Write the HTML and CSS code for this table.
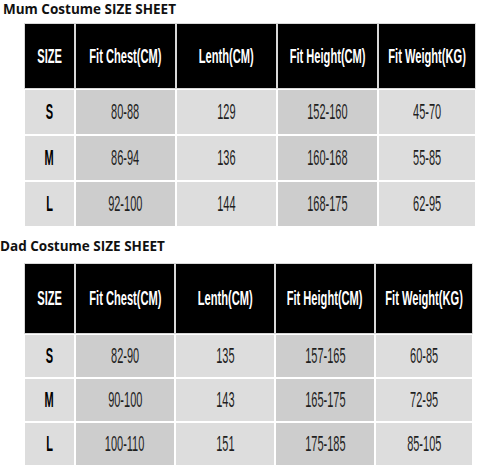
FILE: index.html
```html
<!DOCTYPE html>
<html>
<head>
<meta charset="utf-8">
<link rel="stylesheet" href="styles.css">
</head>
<body>
<section class="sheet sheet-mum">
  <h2 class="title">Mum Costume SIZE SHEET</h2>
  <div class="table">
    <div class="cell head"><span>SIZE</span></div>
    <div class="cell head"><span>Fit Chest(CM)</span></div>
    <div class="cell head"><span>Lenth(CM)</span></div>
    <div class="cell head"><span>Fit Height(CM)</span></div>
    <div class="cell head"><span>Fit Weight(KG)</span></div>

    <div class="cell size light"><span>S</span></div>
    <div class="cell dark"><span>80-88</span></div>
    <div class="cell light"><span>129</span></div>
    <div class="cell dark"><span>152-160</span></div>
    <div class="cell light"><span>45-70</span></div>

    <div class="cell size light"><span>M</span></div>
    <div class="cell dark"><span>86-94</span></div>
    <div class="cell light"><span>136</span></div>
    <div class="cell dark"><span>160-168</span></div>
    <div class="cell light"><span>55-85</span></div>

    <div class="cell size light"><span>L</span></div>
    <div class="cell dark"><span>92-100</span></div>
    <div class="cell light"><span>144</span></div>
    <div class="cell dark"><span>168-175</span></div>
    <div class="cell light"><span>62-95</span></div>
  </div>
</section>
<section class="sheet sheet-dad">
  <h2 class="title">Dad Costume SIZE SHEET</h2>
  <div class="table">
    <div class="cell head"><span>SIZE</span></div>
    <div class="cell head"><span>Fit Chest(CM)</span></div>
    <div class="cell head"><span>Lenth(CM)</span></div>
    <div class="cell head"><span>Fit Height(CM)</span></div>
    <div class="cell head"><span>Fit Weight(KG)</span></div>

    <div class="cell size light"><span>S</span></div>
    <div class="cell dark"><span>82-90</span></div>
    <div class="cell light"><span>135</span></div>
    <div class="cell dark"><span>157-165</span></div>
    <div class="cell light"><span>60-85</span></div>

    <div class="cell size light"><span>M</span></div>
    <div class="cell dark"><span>90-100</span></div>
    <div class="cell light"><span>143</span></div>
    <div class="cell dark"><span>165-175</span></div>
    <div class="cell light"><span>72-95</span></div>

    <div class="cell size light"><span>L</span></div>
    <div class="cell dark"><span>100-110</span></div>
    <div class="cell light"><span>151</span></div>
    <div class="cell dark"><span>175-185</span></div>
    <div class="cell light"><span>85-105</span></div>
  </div>
</section>
</body>
</html>
```

FILE: styles.css
```css
html, body {
  margin: 0;
  padding: 0;
  background: #ffffff;
}

body {
  width: 480px;
  height: 469px;
  overflow: hidden;
  font-family: "Liberation Sans", Arial, sans-serif;
}

.sheet {
  display: flex;
  flex-direction: column;
}

.title {
  margin: 0;
  font-family: "Open Sans", sans-serif;
  font-weight: 700;
  font-size: 13.5px;
  line-height: 18px;
  color: #111111;
  white-space: nowrap;
}

.sheet-mum .title {
  padding-left: 3px;
  height: 18px;
}

.sheet-dad {
  margin-top: 11px;
}

.sheet-dad .title {
  padding-left: 0;
  height: 27px;
}

.table {
  display: grid;
  gap: 2px;
  margin-left: 25px;
  background: #ffffff;
}

.sheet-mum .table {
  margin-top: 6px;
  grid-template-columns: 49px 99px 99px 99px 96px;
  grid-template-rows: 64px 44px 44px 44px;
}

.sheet-dad .table {
  margin-top: 0;
  grid-template-columns: 49px 98px 98px 98px 96px;
  grid-template-rows: 69px 42px 42px 42px;
}

.cell {
  display: flex;
  align-items: center;
  justify-content: center;
  overflow: visible;
  white-space: nowrap;
}

.cell span {
  display: inline-block;
  transform: scaleX(0.5);
}

.head {
  background: #000000;
  color: #ffffff;
  font-weight: 700;
  font-size: 19.5px;
  box-shadow: 0 0 0 1px #d8d8d8;
}

.head span {
  transform: scaleX(0.57);
}

.light {
  background: #dddddd;
}

.dark {
  background: #cdcdcd;
}

.light, .dark {
  color: #1f1f1f;
  font-size: 22px;
}

.size {
  color: #000000;
  font-weight: 700;
}
```
